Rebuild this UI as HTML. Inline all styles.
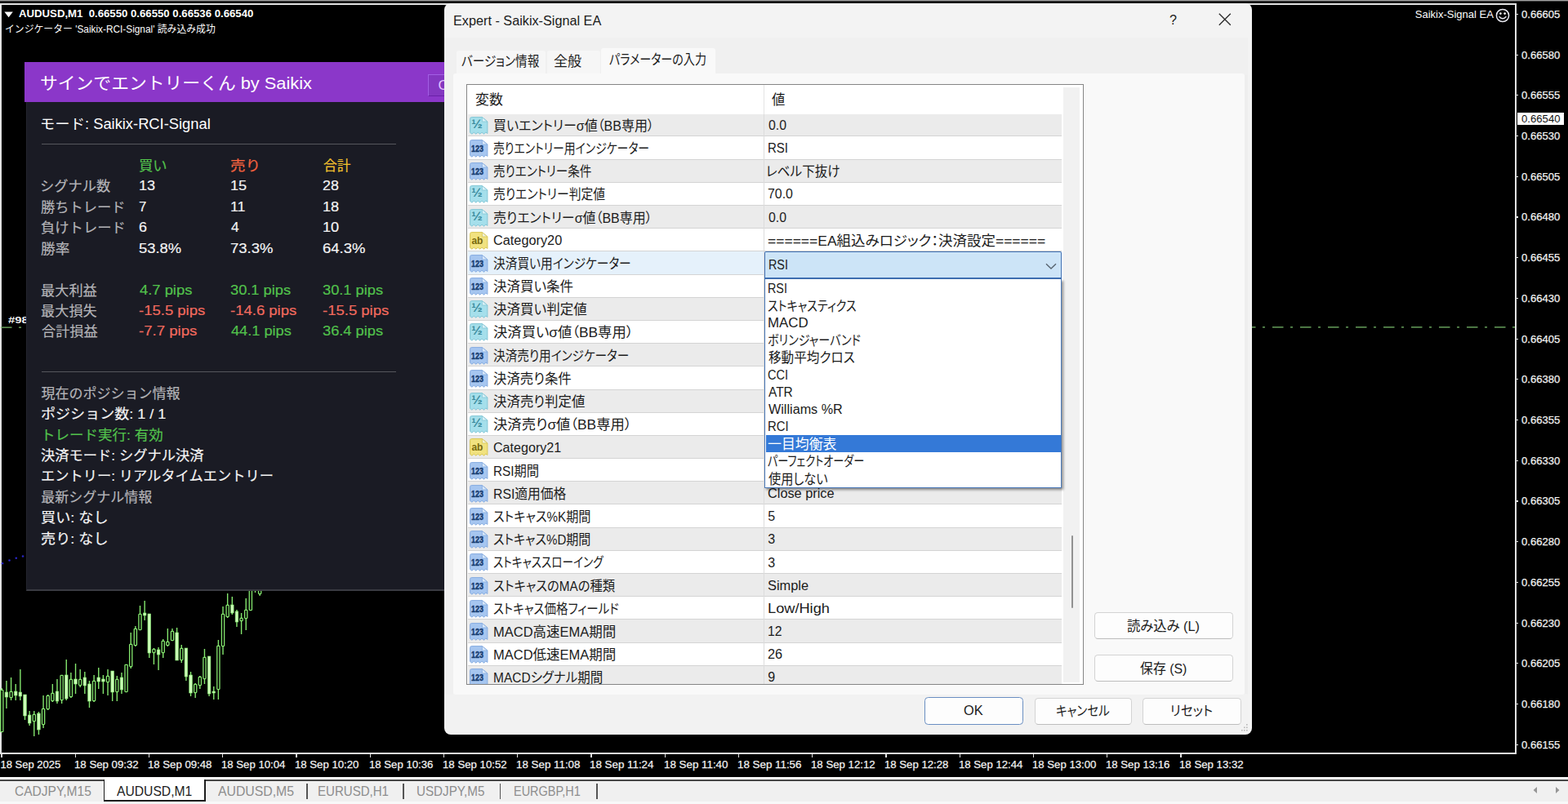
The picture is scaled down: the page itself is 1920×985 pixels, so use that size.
<!DOCTYPE html>
<html lang="ja"><head><meta charset="utf-8"><title>Expert - Saikix-Signal EA</title>
<style>
*{margin:0;padding:0;box-sizing:border-box}
html,body{width:1920px;height:985px;overflow:hidden;background:#000}
body{font-family:"Liberation Sans","Noto Sans CJK JP",sans-serif;position:relative}
#root{position:absolute;left:0;top:0;width:1920px;height:985px;overflow:hidden;background:#000}
#root>div,#root>svg,.t{position:absolute}
.t{white-space:pre;transform-origin:0 50%;display:block}
.d{color:#1b1b1b;font-size:16px;line-height:22px}
.j{color:#1b1b1b;font-size:16.6px;line-height:22px;font-feature-settings:"palt"}
.p{font-size:17px;line-height:24px;-webkit-text-stroke:.18px}
.a{font-size:13px;line-height:18px;color:#f2f2f2;-webkit-text-stroke:.25px}
</style></head>
<body><div id="root">
<div style="left:0;top:0;width:1920px;height:1px;background:#a2a2a2"></div>
<div style="left:0;top:1px;width:1920px;height:1px;background:#3a3a3a"></div>
<div style="left:0px;top:4.3px;width:1856.6px;height:1.5px;background:#e2e2e2;"></div>
<div style="left:0px;top:4.3px;width:1.5px;height:919.6px;background:#e2e2e2;"></div>
<div style="left:1855.3px;top:4.3px;width:1.25px;height:919.6px;background:#e2e2e2;"></div>
<div style="left:0px;top:922.4px;width:1856.6px;height:1.5px;background:#e2e2e2;"></div>
<div style="left:1856.6px;top:16.8px;width:2.6px;height:1.2px;background:#e2e2e2;"></div>
<span class="t a" style="left:1863.25px;top:8.82px;transform:scaleX(1.0054);">0.66605</span>
<div style="left:1856.6px;top:66.5px;width:2.6px;height:1.2px;background:#e2e2e2;"></div>
<span class="t a" style="left:1863.25px;top:58.54px;transform:scaleX(1.0054);">0.66580</span>
<div style="left:1856.6px;top:116.2px;width:2.6px;height:1.2px;background:#e2e2e2;"></div>
<span class="t a" style="left:1863.25px;top:108.26px;transform:scaleX(1.0054);">0.66555</span>
<div style="left:1856.6px;top:166.0px;width:2.6px;height:1.2px;background:#e2e2e2;"></div>
<span class="t a" style="left:1863.25px;top:157.98px;transform:scaleX(1.0054);">0.66530</span>
<div style="left:1856.6px;top:215.7px;width:2.6px;height:1.2px;background:#e2e2e2;"></div>
<span class="t a" style="left:1863.25px;top:207.70px;transform:scaleX(1.0054);">0.66505</span>
<div style="left:1856.6px;top:265.4px;width:2.6px;height:1.2px;background:#e2e2e2;"></div>
<span class="t a" style="left:1863.25px;top:257.42px;transform:scaleX(1.0054);">0.66480</span>
<div style="left:1856.6px;top:315.1px;width:2.6px;height:1.2px;background:#e2e2e2;"></div>
<span class="t a" style="left:1863.25px;top:307.14px;transform:scaleX(1.0054);">0.66455</span>
<div style="left:1856.6px;top:364.8px;width:2.6px;height:1.2px;background:#e2e2e2;"></div>
<span class="t a" style="left:1863.25px;top:356.86px;transform:scaleX(1.0054);">0.66430</span>
<div style="left:1856.6px;top:414.6px;width:2.6px;height:1.2px;background:#e2e2e2;"></div>
<span class="t a" style="left:1863.25px;top:406.58px;transform:scaleX(1.0054);">0.66405</span>
<div style="left:1856.6px;top:464.3px;width:2.6px;height:1.2px;background:#e2e2e2;"></div>
<span class="t a" style="left:1863.25px;top:456.30px;transform:scaleX(1.0054);">0.66380</span>
<div style="left:1856.6px;top:514.0px;width:2.6px;height:1.2px;background:#e2e2e2;"></div>
<span class="t a" style="left:1863.25px;top:506.02px;transform:scaleX(1.0054);">0.66355</span>
<div style="left:1856.6px;top:563.7px;width:2.6px;height:1.2px;background:#e2e2e2;"></div>
<span class="t a" style="left:1863.25px;top:555.74px;transform:scaleX(1.0054);">0.66330</span>
<div style="left:1856.6px;top:613.4px;width:2.6px;height:1.2px;background:#e2e2e2;"></div>
<span class="t a" style="left:1863.25px;top:605.46px;transform:scaleX(1.0054);">0.66305</span>
<div style="left:1856.6px;top:663.2px;width:2.6px;height:1.2px;background:#e2e2e2;"></div>
<span class="t a" style="left:1863.25px;top:655.18px;transform:scaleX(1.0054);">0.66280</span>
<div style="left:1856.6px;top:712.9px;width:2.6px;height:1.2px;background:#e2e2e2;"></div>
<span class="t a" style="left:1863.25px;top:704.90px;transform:scaleX(1.0054);">0.66255</span>
<div style="left:1856.6px;top:762.6px;width:2.6px;height:1.2px;background:#e2e2e2;"></div>
<span class="t a" style="left:1863.25px;top:754.62px;transform:scaleX(1.0054);">0.66230</span>
<div style="left:1856.6px;top:812.3px;width:2.6px;height:1.2px;background:#e2e2e2;"></div>
<span class="t a" style="left:1863.25px;top:804.34px;transform:scaleX(1.0054);">0.66205</span>
<div style="left:1856.6px;top:862.0px;width:2.6px;height:1.2px;background:#e2e2e2;"></div>
<span class="t a" style="left:1863.25px;top:854.06px;transform:scaleX(1.0054);">0.66180</span>
<div style="left:1856.6px;top:911.8px;width:2.6px;height:1.2px;background:#e2e2e2;"></div>
<span class="t a" style="left:1863.25px;top:903.78px;transform:scaleX(1.0054);">0.66155</span>
<div style="left:1858.3px;top:138.2px;width:57.2px;height:15px;background:#ffffff;"></div>
<span class="t" style="left:1862.99px;top:137.22px;color:#111;font-size:13px;line-height:18px;transform:scaleX(1.0109);">0.66540</span>
<div style="left:1.4px;top:923.9px;width:1.2px;height:4.4px;background:#e2e2e2;"></div>
<span class="t a" style="left:0.45px;top:928.22px;">18 Sep 2025</span>
<div style="left:91.7px;top:923.9px;width:1.2px;height:4.4px;background:#e2e2e2;"></div>
<span class="t a" style="left:90.69px;top:928.22px;transform:scaleX(1.0171);">18 Sep 09:32</span>
<div style="left:181.9px;top:923.9px;width:1.2px;height:4.4px;background:#e2e2e2;"></div>
<span class="t a" style="left:180.94px;top:928.22px;transform:scaleX(1.0138);">18 Sep 09:48</span>
<div style="left:272.1px;top:923.9px;width:1.2px;height:4.4px;background:#e2e2e2;"></div>
<span class="t a" style="left:271.19px;top:928.22px;transform:scaleX(1.0138);">18 Sep 10:04</span>
<div style="left:362.4px;top:923.9px;width:1.2px;height:4.4px;background:#e2e2e2;"></div>
<span class="t a" style="left:361.44px;top:928.22px;transform:scaleX(1.0138);">18 Sep 10:20</span>
<div style="left:452.6px;top:923.9px;width:1.2px;height:4.4px;background:#e2e2e2;"></div>
<span class="t a" style="left:451.69px;top:928.22px;transform:scaleX(1.0138);">18 Sep 10:36</span>
<div style="left:542.9px;top:923.9px;width:1.2px;height:4.4px;background:#e2e2e2;"></div>
<span class="t a" style="left:541.94px;top:928.22px;transform:scaleX(1.0171);">18 Sep 10:52</span>
<div style="left:633.1px;top:923.9px;width:1.2px;height:4.4px;background:#e2e2e2;"></div>
<span class="t a" style="left:632.18px;top:928.22px;transform:scaleX(1.0272);">18 Sep 11:08</span>
<div style="left:723.4px;top:923.9px;width:1.2px;height:4.4px;background:#e2e2e2;"></div>
<span class="t a" style="left:722.43px;top:928.22px;transform:scaleX(1.0272);">18 Sep 11:24</span>
<div style="left:813.6px;top:923.9px;width:1.2px;height:4.4px;background:#e2e2e2;"></div>
<span class="t a" style="left:812.68px;top:928.22px;transform:scaleX(1.0272);">18 Sep 11:40</span>
<div style="left:903.9px;top:923.9px;width:1.2px;height:4.4px;background:#e2e2e2;"></div>
<span class="t a" style="left:902.93px;top:928.22px;transform:scaleX(1.0272);">18 Sep 11:56</span>
<div style="left:994.1px;top:923.9px;width:1.2px;height:4.4px;background:#e2e2e2;"></div>
<span class="t a" style="left:993.19px;top:928.22px;transform:scaleX(1.0171);">18 Sep 12:12</span>
<div style="left:1084.4px;top:923.9px;width:1.2px;height:4.4px;background:#e2e2e2;"></div>
<span class="t a" style="left:1083.44px;top:928.22px;transform:scaleX(1.0138);">18 Sep 12:28</span>
<div style="left:1174.7px;top:923.9px;width:1.2px;height:4.4px;background:#e2e2e2;"></div>
<span class="t a" style="left:1173.69px;top:928.22px;transform:scaleX(1.0138);">18 Sep 12:44</span>
<div style="left:1264.9px;top:923.9px;width:1.2px;height:4.4px;background:#e2e2e2;"></div>
<span class="t a" style="left:1263.94px;top:928.22px;transform:scaleX(1.0138);">18 Sep 13:00</span>
<div style="left:1355.2px;top:923.9px;width:1.2px;height:4.4px;background:#e2e2e2;"></div>
<span class="t a" style="left:1354.19px;top:928.22px;transform:scaleX(1.0138);">18 Sep 13:16</span>
<div style="left:1445.4px;top:923.9px;width:1.2px;height:4.4px;background:#e2e2e2;"></div>
<span class="t a" style="left:1444.44px;top:928.22px;transform:scaleX(1.0171);">18 Sep 13:32</span>
<svg width="1920" height="985" style="left:0;top:0" viewBox="0 0 1920 985"><path d="M1533 400.8H1855" stroke="#7abd6c" stroke-width="1.3" stroke-dasharray="13.5 8.5 3 9" stroke-dashoffset="9" fill="none"/><path d="M1 401.2H14.5M23 401.2H26" stroke="#7abd6c" stroke-width="1.3" fill="none"/><g fill="#2a26c4"><circle cx="3" cy="690.2" r="1.3"/><circle cx="11.5" cy="686.5" r="1.3"/><circle cx="19.8" cy="683.8" r="1.3"/><circle cx="28" cy="681.5" r="1.3"/></g></svg>
<span class="t" style="left:9.66px;top:385.24px;color:#f0f0f0;font-size:11px;line-height:15px;font-weight:700;transform:scaleX(1.3521);">#98</span>
<svg width="12" height="8" style="left:5px;top:13.5px" viewBox="0 0 12 8"><path d="M0.4 0.4h10.4L5.6 7.2z" fill="#fff"/></svg>
<span class="t" style="left:23.25px;top:7.52px;color:#fff;font-size:13px;line-height:18px;font-weight:700;transform:scaleX(1.0142);">AUDUSD,M1  0.66550 0.66550 0.66536 0.66540</span>
<span class="t" style="left:5.51px;top:28.08px;color:#fff;font-size:12px;line-height:17px;transform:scaleX(0.9865);">インジケーター 'Saikix-RCI-Signal' 読み込み成功</span>
<span class="t" style="left:1732.75px;top:9.02px;color:#fff;font-size:13px;line-height:18px;">Saikix-Signal EA</span>
<svg width="20" height="20" style="left:1830px;top:8.7px" viewBox="0 0 20 20"><circle cx="10" cy="10" r="7.6" fill="none" stroke="#e8e8f0" stroke-width="1.5"/><circle cx="7.4" cy="7.6" r="1.3" fill="#fff"/><circle cx="12.6" cy="7.6" r="1.3" fill="#fff"/><path d="M5.6 11.2q4.4 5 8.8 0" fill="none" stroke="#e8e8f0" stroke-width="1.4"/></svg>
<svg width="340" height="985" style="left:0;top:0" viewBox="0 0 340 985" shape-rendering="auto"><line x1="2.30" y1="843" x2="2.30" y2="897" stroke="#84e66e" stroke-width="1.4"/><rect x="0.70" y="845.4" width="3.2" height="51.2" fill="#000" stroke="#84e66e" stroke-width="1.3" rx="0.8"/><line x1="7.94" y1="834" x2="7.94" y2="868" stroke="#84e66e" stroke-width="1.4"/><rect x="6.14" y="848" width="3.6" height="6" fill="#caffb6" stroke="#84e66e" stroke-width="0.6"/><line x1="13.58" y1="830" x2="13.58" y2="858" stroke="#84e66e" stroke-width="1.4"/><rect x="11.98" y="847.4" width="3.2" height="7.2" fill="#000" stroke="#84e66e" stroke-width="1.3" rx="0.8"/><line x1="19.22" y1="838" x2="19.22" y2="858" stroke="#84e66e" stroke-width="1.4"/><rect x="17.42" y="847" width="3.6" height="5" fill="#caffb6" stroke="#84e66e" stroke-width="0.6"/><line x1="24.86" y1="820" x2="24.86" y2="858" stroke="#84e66e" stroke-width="1.4"/><rect x="23.06" y="848" width="3.6" height="5" fill="#caffb6" stroke="#84e66e" stroke-width="0.6"/><line x1="30.50" y1="851" x2="30.50" y2="882" stroke="#84e66e" stroke-width="1.4"/><rect x="28.70" y="851" width="3.6" height="26" fill="#caffb6" stroke="#84e66e" stroke-width="0.6"/><line x1="36.14" y1="871" x2="36.14" y2="889" stroke="#84e66e" stroke-width="1.4"/><rect x="34.34" y="876" width="3.6" height="10" fill="#caffb6" stroke="#84e66e" stroke-width="0.6"/><line x1="41.78" y1="871" x2="41.78" y2="902" stroke="#84e66e" stroke-width="1.4"/><rect x="40.18" y="875.4" width="3.2" height="8.2" fill="#000" stroke="#84e66e" stroke-width="1.3" rx="0.8"/><line x1="47.42" y1="872" x2="47.42" y2="900" stroke="#84e66e" stroke-width="1.4"/><rect x="45.62" y="874" width="3.6" height="20" fill="#caffb6" stroke="#84e66e" stroke-width="0.6"/><line x1="53.06" y1="852" x2="53.06" y2="892" stroke="#84e66e" stroke-width="1.4"/><rect x="51.46" y="868.4" width="3.2" height="19.2" fill="#000" stroke="#84e66e" stroke-width="1.3" rx="0.8"/><line x1="58.70" y1="851" x2="58.70" y2="870" stroke="#84e66e" stroke-width="1.4"/><rect x="57.10" y="852.4" width="3.2" height="16.2" fill="#000" stroke="#84e66e" stroke-width="1.3" rx="0.8"/><line x1="64.34" y1="838" x2="64.34" y2="860" stroke="#84e66e" stroke-width="1.4"/><rect x="62.74" y="849.4" width="3.2" height="9.2" fill="#000" stroke="#84e66e" stroke-width="1.3" rx="0.8"/><line x1="69.98" y1="832" x2="69.98" y2="862" stroke="#84e66e" stroke-width="1.4"/><rect x="68.18" y="847" width="3.6" height="12" fill="#caffb6" stroke="#84e66e" stroke-width="0.6"/><line x1="75.62" y1="827" x2="75.62" y2="862" stroke="#84e66e" stroke-width="1.4"/><rect x="74.02" y="827.4" width="3.2" height="30.2" fill="#000" stroke="#84e66e" stroke-width="1.3" rx="0.8"/><line x1="81.26" y1="808" x2="81.26" y2="858" stroke="#84e66e" stroke-width="1.4"/><rect x="79.46" y="827" width="3.6" height="29" fill="#caffb6" stroke="#84e66e" stroke-width="0.6"/><line x1="86.90" y1="824" x2="86.90" y2="855" stroke="#84e66e" stroke-width="1.4"/><rect x="85.30" y="832.4" width="3.2" height="21.2" fill="#000" stroke="#84e66e" stroke-width="1.3" rx="0.8"/><line x1="92.54" y1="813" x2="92.54" y2="850" stroke="#84e66e" stroke-width="1.4"/><rect x="90.74" y="832" width="3.6" height="6" fill="#caffb6" stroke="#84e66e" stroke-width="0.6"/><line x1="98.18" y1="820" x2="98.18" y2="842" stroke="#84e66e" stroke-width="1.4"/><rect x="96.58" y="832.4" width="3.2" height="7.2" fill="#000" stroke="#84e66e" stroke-width="1.3" rx="0.8"/><line x1="103.82" y1="823" x2="103.82" y2="850" stroke="#84e66e" stroke-width="1.4"/><rect x="102.02" y="830" width="3.6" height="10" fill="#caffb6" stroke="#84e66e" stroke-width="0.6"/><line x1="109.46" y1="834" x2="109.46" y2="867" stroke="#84e66e" stroke-width="1.4"/><rect x="107.66" y="838" width="3.6" height="21" fill="#caffb6" stroke="#84e66e" stroke-width="0.6"/><line x1="115.10" y1="827" x2="115.10" y2="860" stroke="#84e66e" stroke-width="1.4"/><rect x="113.50" y="834.4" width="3.2" height="24.2" fill="#000" stroke="#84e66e" stroke-width="1.3" rx="0.8"/><line x1="120.74" y1="818" x2="120.74" y2="844" stroke="#84e66e" stroke-width="1.4"/><rect x="118.94" y="830" width="3.6" height="5" fill="#caffb6" stroke="#84e66e" stroke-width="0.6"/><line x1="126.38" y1="827" x2="126.38" y2="850" stroke="#84e66e" stroke-width="1.4"/><rect x="124.58" y="832" width="3.6" height="3" fill="#caffb6" stroke="#84e66e" stroke-width="0.6"/><line x1="132.02" y1="820" x2="132.02" y2="852" stroke="#84e66e" stroke-width="1.4"/><rect x="130.42" y="828.4" width="3.2" height="7.2" fill="#000" stroke="#84e66e" stroke-width="1.3" rx="0.8"/><line x1="137.66" y1="822" x2="137.66" y2="859" stroke="#84e66e" stroke-width="1.4"/><rect x="135.86" y="822" width="3.6" height="26" fill="#caffb6" stroke="#84e66e" stroke-width="0.6"/><line x1="143.30" y1="828" x2="143.30" y2="859" stroke="#84e66e" stroke-width="1.4"/><rect x="141.70" y="832.4" width="3.2" height="15.2" fill="#000" stroke="#84e66e" stroke-width="1.3" rx="0.8"/><line x1="148.94" y1="824" x2="148.94" y2="850" stroke="#84e66e" stroke-width="1.4"/><rect x="147.14" y="830" width="3.6" height="15" fill="#caffb6" stroke="#84e66e" stroke-width="0.6"/><line x1="154.58" y1="814" x2="154.58" y2="848" stroke="#84e66e" stroke-width="1.4"/><rect x="152.98" y="814.4" width="3.2" height="33.2" fill="#000" stroke="#84e66e" stroke-width="1.3" rx="0.8"/><line x1="160.22" y1="775" x2="160.22" y2="819" stroke="#84e66e" stroke-width="1.4"/><rect x="158.62" y="789.4" width="3.2" height="27.2" fill="#000" stroke="#84e66e" stroke-width="1.3" rx="0.8"/><line x1="165.86" y1="767" x2="165.86" y2="792" stroke="#84e66e" stroke-width="1.4"/><rect x="164.26" y="770.4" width="3.2" height="20.2" fill="#000" stroke="#84e66e" stroke-width="1.3" rx="0.8"/><line x1="171.50" y1="742" x2="171.50" y2="772" stroke="#84e66e" stroke-width="1.4"/><rect x="169.90" y="752.4" width="3.2" height="19.2" fill="#000" stroke="#84e66e" stroke-width="1.3" rx="0.8"/><line x1="177.14" y1="736" x2="177.14" y2="760" stroke="#84e66e" stroke-width="1.4"/><rect x="175.34" y="751" width="3.6" height="3" fill="#caffb6" stroke="#84e66e" stroke-width="0.6"/><line x1="182.78" y1="752" x2="182.78" y2="806" stroke="#84e66e" stroke-width="1.4"/><rect x="180.98" y="752" width="3.6" height="48" fill="#caffb6" stroke="#84e66e" stroke-width="0.6"/><line x1="188.42" y1="794" x2="188.42" y2="814" stroke="#84e66e" stroke-width="1.4"/><rect x="186.82" y="795.4" width="3.2" height="4.2" fill="#000" stroke="#84e66e" stroke-width="1.3" rx="0.8"/><line x1="194.06" y1="793" x2="194.06" y2="821" stroke="#84e66e" stroke-width="1.4"/><rect x="192.26" y="796" width="3.6" height="6" fill="#caffb6" stroke="#84e66e" stroke-width="0.6"/><line x1="199.70" y1="783" x2="199.70" y2="806" stroke="#84e66e" stroke-width="1.4"/><rect x="198.10" y="785.4" width="3.2" height="14.2" fill="#000" stroke="#84e66e" stroke-width="1.3" rx="0.8"/><line x1="205.34" y1="770" x2="205.34" y2="792" stroke="#84e66e" stroke-width="1.4"/><rect x="203.74" y="786.4" width="3.2" height="4.2" fill="#000" stroke="#84e66e" stroke-width="1.3" rx="0.8"/><line x1="210.98" y1="770" x2="210.98" y2="785" stroke="#84e66e" stroke-width="1.4"/><rect x="209.38" y="773.4" width="3.2" height="11.2" fill="#000" stroke="#84e66e" stroke-width="1.3" rx="0.8"/><line x1="216.62" y1="769" x2="216.62" y2="809" stroke="#84e66e" stroke-width="1.4"/><rect x="214.82" y="775" width="3.6" height="34" fill="#caffb6" stroke="#84e66e" stroke-width="0.6"/><line x1="222.26" y1="790" x2="222.26" y2="812" stroke="#84e66e" stroke-width="1.4"/><rect x="220.66" y="794.4" width="3.2" height="14.2" fill="#000" stroke="#84e66e" stroke-width="1.3" rx="0.8"/><line x1="227.90" y1="794" x2="227.90" y2="834" stroke="#84e66e" stroke-width="1.4"/><rect x="226.10" y="794" width="3.6" height="35" fill="#caffb6" stroke="#84e66e" stroke-width="0.6"/><line x1="233.54" y1="823" x2="233.54" y2="853" stroke="#84e66e" stroke-width="1.4"/><rect x="231.74" y="827" width="3.6" height="22" fill="#caffb6" stroke="#84e66e" stroke-width="0.6"/><line x1="239.18" y1="837" x2="239.18" y2="855" stroke="#84e66e" stroke-width="1.4"/><rect x="237.58" y="838.4" width="3.2" height="10.2" fill="#000" stroke="#84e66e" stroke-width="1.3" rx="0.8"/><line x1="244.82" y1="828" x2="244.82" y2="844" stroke="#84e66e" stroke-width="1.4"/><rect x="243.22" y="829.4" width="3.2" height="10.2" fill="#000" stroke="#84e66e" stroke-width="1.3" rx="0.8"/><line x1="250.46" y1="795" x2="250.46" y2="838" stroke="#84e66e" stroke-width="1.4"/><rect x="248.86" y="805.4" width="3.2" height="26.2" fill="#000" stroke="#84e66e" stroke-width="1.3" rx="0.8"/><line x1="256.10" y1="804" x2="256.10" y2="853" stroke="#84e66e" stroke-width="1.4"/><rect x="254.30" y="804" width="3.6" height="46" fill="#caffb6" stroke="#84e66e" stroke-width="0.6"/><line x1="261.74" y1="841" x2="261.74" y2="857" stroke="#84e66e" stroke-width="1.4"/><rect x="259.94" y="847" width="3.6" height="2" fill="#caffb6" stroke="#84e66e" stroke-width="0.6"/><line x1="267.38" y1="784" x2="267.38" y2="857" stroke="#84e66e" stroke-width="1.4"/><rect x="265.78" y="791.4" width="3.2" height="53.2" fill="#000" stroke="#84e66e" stroke-width="1.3" rx="0.8"/><line x1="273.02" y1="743" x2="273.02" y2="802" stroke="#84e66e" stroke-width="1.4"/><rect x="271.42" y="752.4" width="3.2" height="39.2" fill="#000" stroke="#84e66e" stroke-width="1.3" rx="0.8"/><line x1="278.66" y1="727" x2="278.66" y2="757" stroke="#84e66e" stroke-width="1.4"/><rect x="277.06" y="741.4" width="3.2" height="14.2" fill="#000" stroke="#84e66e" stroke-width="1.3" rx="0.8"/><line x1="284.30" y1="731" x2="284.30" y2="753" stroke="#84e66e" stroke-width="1.4"/><rect x="282.50" y="741" width="3.6" height="10" fill="#caffb6" stroke="#84e66e" stroke-width="0.6"/><line x1="289.94" y1="747" x2="289.94" y2="768" stroke="#84e66e" stroke-width="1.4"/><rect x="288.14" y="749" width="3.6" height="13" fill="#caffb6" stroke="#84e66e" stroke-width="0.6"/><line x1="295.58" y1="751" x2="295.58" y2="777" stroke="#84e66e" stroke-width="1.4"/><rect x="293.98" y="757.4" width="3.2" height="3.2" fill="#000" stroke="#84e66e" stroke-width="1.3" rx="0.8"/><line x1="301.22" y1="733" x2="301.22" y2="772" stroke="#84e66e" stroke-width="1.4"/><rect x="299.62" y="747.4" width="3.2" height="10.2" fill="#000" stroke="#84e66e" stroke-width="1.3" rx="0.8"/><line x1="306.86" y1="700" x2="306.86" y2="748" stroke="#84e66e" stroke-width="1.4"/><rect x="305.26" y="705.4" width="3.2" height="42.2" fill="#000" stroke="#84e66e" stroke-width="1.3" rx="0.8"/><line x1="312.50" y1="700" x2="312.50" y2="726" stroke="#84e66e" stroke-width="1.4"/><rect x="310.90" y="700.4" width="3.2" height="9.2" fill="#000" stroke="#84e66e" stroke-width="1.3" rx="0.8"/><line x1="318.14" y1="715" x2="318.14" y2="730" stroke="#84e66e" stroke-width="1.4"/><rect x="316.54" y="722.4" width="3.2" height="5.2" fill="#000" stroke="#84e66e" stroke-width="1.3" rx="0.8"/></svg>
<div style="left:32px;top:120px;width:560px;height:603.6px;background:#1a1b24;border-left:1px solid #23242d;border-bottom:2px solid #3a3b42;"></div>
<div style="left:30px;top:75.7px;width:560px;height:49.8px;background:#8b37c9;"></div>
<div style="left:523.7px;top:91px;width:40px;height:26.8px;background:#8337c0;border:1.5px solid #a25fe4;border-bottom-color:#6a20a8;"></div>
<span class="t" style="left:536.45px;top:92.88px;color:#e4c2ff;font-size:17px;line-height:24px;">C</span>
<span class="t" style="left:49.44px;top:87.39px;color:#fff;font-size:21px;line-height:30px;transform:scaleX(1.0376);">サインでエントリーくん by Saikix</span>
<span class="t" style="left:48.91px;top:140.38px;color:#fff;font-size:17.5px;line-height:24px;transform:scaleX(1.0471);">モード: Saikix-RCI-Signal</span>
<div style="left:51px;top:176px;width:434px;height:1.3px;background:#55565c;"></div>
<div style="left:51px;top:455px;width:434px;height:1.3px;background:#55565c;"></div>
<span class="t p" style="left:170.24px;top:192.03px;color:#52c24c;transform:scaleX(1.0156);">買い</span>
<span class="t p" style="left:282.18px;top:192.03px;color:#f0613f;transform:scaleX(1.0924);">売り</span>
<span class="t p" style="left:395.51px;top:192.03px;color:#f2c12e;transform:scaleX(0.9848);">合計</span>
<span class="t p" style="left:49.22px;top:217.33px;color:#b4b4b8;transform:scaleX(1.0151);">シグナル数</span>
<span class="t p" style="left:169.67px;top:216.48px;color:#f4f4f4;transform:scaleX(1.0647);">13</span>
<span class="t p" style="left:281.67px;top:216.48px;color:#f4f4f4;transform:scaleX(1.0647);">15</span>
<span class="t p" style="left:395.22px;top:216.48px;color:#f4f4f4;transform:scaleX(1.0457);">28</span>
<span class="t p" style="left:50.49px;top:242.83px;color:#b4b4b8;transform:scaleX(1.0151);">勝ちトレード</span>
<span class="t p" style="left:170.26px;top:241.98px;color:#f4f4f4;transform:scaleX(0.9875);">7</span>
<span class="t p" style="left:281.69px;top:241.98px;color:#f4f4f4;transform:scaleX(1.0476);">11</span>
<span class="t p" style="left:394.67px;top:241.98px;color:#f4f4f4;transform:scaleX(1.0647);">18</span>
<span class="t p" style="left:50.24px;top:268.23px;color:#b4b4b8;transform:scaleX(1.0176);">負けトレード</span>
<span class="t p" style="left:170.21px;top:267.38px;color:#f4f4f4;transform:scaleX(1.0500);">6</span>
<span class="t p" style="left:282.75px;top:267.38px;color:#f4f4f4;transform:scaleX(1.0171);">4</span>
<span class="t p" style="left:394.67px;top:267.38px;color:#f4f4f4;transform:scaleX(1.0647);">10</span>
<span class="t p" style="left:50.48px;top:293.73px;color:#b4b4b8;transform:scaleX(1.0382);">勝率</span>
<span class="t p" style="left:170.46px;top:292.88px;color:#f4f4f4;transform:scaleX(1.0794);">53.8%</span>
<span class="t p" style="left:282.19px;top:292.88px;color:#f4f4f4;transform:scaleX(1.0851);">73.3%</span>
<span class="t p" style="left:395.19px;top:292.88px;color:#f4f4f4;transform:scaleX(1.0851);">64.3%</span>
<span class="t p" style="left:50.24px;top:344.53px;color:#b4b4b8;transform:scaleX(1.0112);">最大利益</span>
<span class="t p" style="left:170.73px;top:343.68px;color:#52c24c;transform:scaleX(1.0809);">4.7 pips</span>
<span class="t p" style="left:282.46px;top:343.68px;color:#52c24c;transform:scaleX(1.0735);">30.1 pips</span>
<span class="t p" style="left:395.46px;top:343.68px;color:#52c24c;transform:scaleX(1.0735);">30.1 pips</span>
<span class="t p" style="left:50.24px;top:370.03px;color:#b4b4b8;transform:scaleX(1.0112);">最大損失</span>
<span class="t p" style="left:170.18px;top:369.18px;color:#f26a5e;transform:scaleX(1.0884);">-15.5 pips</span>
<span class="t p" style="left:282.18px;top:369.18px;color:#f26a5e;transform:scaleX(1.0884);">-14.6 pips</span>
<span class="t p" style="left:395.18px;top:369.18px;color:#f26a5e;transform:scaleX(1.0884);">-15.5 pips</span>
<span class="t p" style="left:50.50px;top:395.33px;color:#b4b4b8;transform:scaleX(1.0075);">合計損益</span>
<span class="t p" style="left:170.18px;top:394.48px;color:#f26a5e;transform:scaleX(1.0938);">-7.7 pips</span>
<span class="t p" style="left:282.73px;top:394.48px;color:#52c24c;transform:scaleX(1.0696);">44.1 pips</span>
<span class="t p" style="left:395.46px;top:394.48px;color:#52c24c;transform:scaleX(1.0735);">36.4 pips</span>
<span class="t p" style="left:50.50px;top:471.03px;color:#b4b4b8;">現在のポジション情報</span>
<span class="t p" style="left:49.94px;top:496.33px;color:#f4f4f4;transform:scaleX(1.0613);">ポジション数: 1 / 1</span>
<span class="t p" style="left:49.53px;top:521.73px;color:#52c24c;transform:scaleX(1.0302);">トレード実行: 有効</span>
<span class="t p" style="left:50.49px;top:547.03px;color:#f4f4f4;transform:scaleX(1.0153);">決済モード: シグナル決済</span>
<span class="t p" style="left:49.73px;top:572.33px;color:#f4f4f4;transform:scaleX(1.0144);">エントリー: リアルタイムエントリー</span>
<span class="t p" style="left:50.25px;top:597.73px;color:#b4b4b8;">最新シグナル情報</span>
<span class="t p" style="left:50.20px;top:623.03px;color:#f4f4f4;transform:scaleX(1.0667);">買い: なし</span>
<span class="t p" style="left:50.20px;top:648.53px;color:#f4f4f4;transform:scaleX(1.0667);">売り: なし</span>
<div style="left:544px;top:4.3px;width:988.5px;height:896.2px;background:linear-gradient(#f3f3f3 0,#f3f3f3 42px,#f0f0f0 42px,#f0f0f0 846px,#f2f2f2 847px);border-radius:8px;"></div>
<div style="left:1527.5px;top:14px;width:5px;height:878px;background:#f3f3f3;"></div>
<div style="left:1523.5px;top:92px;width:4px;height:758px;background:#eeeeee;"></div>
<span class="t d" style="left:554.73px;top:15.04px;transform:scaleX(1.0141);">Expert - Saikix-Signal EA</span>
<span class="t" style="left:1431.89px;top:13.18px;color:#222;font-size:17px;line-height:24px;transform:scaleX(0.9500);">?</span>
<svg width="18" height="18" style="left:1491px;top:15.3px" viewBox="0 0 18 18"><path d="M1.8 1.8L15.8 15.8M15.8 1.8L1.8 15.8" stroke="#2b2b2b" stroke-width="1.35" fill="none"/></svg>
<div style="left:558.5px;top:62px;width:109px;height:28px;background:#f6f6f6;border-radius:3px 3px 0 0;"></div>
<div style="left:669.5px;top:62px;width:65px;height:28px;background:#f6f6f6;border-radius:3px 3px 0 0;"></div>
<div style="left:555px;top:89.5px;width:969px;height:761.3px;background:#f9f9f9;border-radius:3px;"></div>
<div style="left:736px;top:58.5px;width:139.5px;height:33px;background:#f9f9f9;border-radius:3px 3px 0 0;"></div>
<span class="t j" style="left:565.34px;top:65.49px;transform:scaleX(0.8806);">バージョン情報</span>
<span class="t j" style="left:677.73px;top:65.49px;transform:scaleX(1.0312);">全般</span>
<span class="t j" style="left:746.36px;top:63.39px;transform:scaleX(0.8478);">パラメーターの入力</span>
<div style="left:571px;top:102.6px;width:755.5px;height:736.6px;background:#ffffff;border:1.5px solid #858585;"></div>
<div style="left:1301.6px;top:106.6px;width:20.6px;height:729.5px;background:#f1f1f1;"></div>
<div style="left:1311.5px;top:655.5px;width:2px;height:89.5px;background:#929292;border-radius:1px;"></div>
<span class="t j" style="left:582.23px;top:112.29px;transform:scaleX(1.0236);">変数</span>
<span class="t j" style="left:944.75px;top:112.29px;transform:scaleX(0.9841);">値</span>
<div style="left:572.5px;top:139.6px;width:727.3px;height:27.84px;background:#ebebeb;border-bottom:1px solid #d4d4d4;"></div>
<div style="left:934.5px;top:139.6px;width:1px;height:27.84px;background:#dcdcdc;"></div>
<svg width="23" height="22" style="left:575px;top:142.75px" viewBox="0 0 23 22"><path d="M2.6 0.6H15.4L21.9 6V20.5L19.9 19L17.6 21.2L15.1 19.2L12.7 21.2L10.2 19.2L7.8 21.2L5.3 19.2L2.9 21.2L0.6 19.4V2.6Q0.6 0.6 2.6 0.6Z" fill="#a5dfeb" stroke="#83c6d6" stroke-width="1"/><path d="M15.4 0.6V6H21.9Z" fill="#eef7fc" fill-opacity=".7" stroke="#83c6d6" stroke-width=".8"/><text x="8.9" y="14.4" text-anchor="middle" font-family="Liberation Sans,sans-serif" font-size="15.5" font-weight="700" fill="#3a8b9d" textLength="13.5" lengthAdjust="spacingAndGlyphs">½</text></svg>
<span class="t j" style="left:603.84px;top:143.74px;transform:scaleX(0.9634);">買いエントリーσ値（BB専用）</span>
<span class="t d" style="left:940.51px;top:142.89px;transform:scaleX(0.9882);">0.0</span>
<div style="left:572.5px;top:167.44px;width:727.3px;height:28.19px;background:#ffffff;border-bottom:1px solid #d4d4d4;"></div>
<div style="left:934.5px;top:167.44px;width:1px;height:28.19px;background:#dcdcdc;"></div>
<svg width="23" height="22" style="left:575px;top:170.94px" viewBox="0 0 23 22"><path d="M2.6 0.6H15.4L21.9 6V20.5L19.9 19L17.6 21.2L15.1 19.2L12.7 21.2L10.2 19.2L7.8 21.2L5.3 19.2L2.9 21.2L0.6 19.4V2.6Q0.6 0.6 2.6 0.6Z" fill="#a6c6f0" stroke="#86ace0" stroke-width="1"/><path d="M15.4 0.6V6H21.9Z" fill="#eef7fc" fill-opacity=".7" stroke="#86ace0" stroke-width=".8"/><text x="9.6" y="15.2" text-anchor="middle" font-family="Liberation Sans,sans-serif" font-size="11.5" font-weight="700" fill="#163c70" stroke="#163c70" stroke-width=".45" textLength="15" lengthAdjust="spacingAndGlyphs">123</text></svg>
<span class="t j" style="left:604.17px;top:171.93px;transform:scaleX(0.8358);">売りエントリー用インジケーター</span>
<span class="t d" style="left:939.83px;top:171.08px;transform:scaleX(0.9375);">RSI</span>
<div style="left:572.5px;top:195.63px;width:727.3px;height:28.19px;background:#ebebeb;border-bottom:1px solid #d4d4d4;"></div>
<div style="left:934.5px;top:195.63px;width:1px;height:28.19px;background:#dcdcdc;"></div>
<svg width="23" height="22" style="left:575px;top:199.13px" viewBox="0 0 23 22"><path d="M2.6 0.6H15.4L21.9 6V20.5L19.9 19L17.6 21.2L15.1 19.2L12.7 21.2L10.2 19.2L7.8 21.2L5.3 19.2L2.9 21.2L0.6 19.4V2.6Q0.6 0.6 2.6 0.6Z" fill="#a6c6f0" stroke="#86ace0" stroke-width="1"/><path d="M15.4 0.6V6H21.9Z" fill="#eef7fc" fill-opacity=".7" stroke="#86ace0" stroke-width=".8"/><text x="9.6" y="15.2" text-anchor="middle" font-family="Liberation Sans,sans-serif" font-size="11.5" font-weight="700" fill="#163c70" stroke="#163c70" stroke-width=".45" textLength="15" lengthAdjust="spacingAndGlyphs">123</text></svg>
<span class="t j" style="left:604.14px;top:200.12px;transform:scaleX(0.8790);">売りエントリー条件</span>
<span class="t j" style="left:938.42px;top:200.12px;transform:scaleX(0.9380);">レベル下抜け</span>
<div style="left:572.5px;top:223.82px;width:727.3px;height:28.19px;background:#ffffff;border-bottom:1px solid #d4d4d4;"></div>
<div style="left:934.5px;top:223.82px;width:1px;height:28.19px;background:#dcdcdc;"></div>
<svg width="23" height="22" style="left:575px;top:227.32px" viewBox="0 0 23 22"><path d="M2.6 0.6H15.4L21.9 6V20.5L19.9 19L17.6 21.2L15.1 19.2L12.7 21.2L10.2 19.2L7.8 21.2L5.3 19.2L2.9 21.2L0.6 19.4V2.6Q0.6 0.6 2.6 0.6Z" fill="#a5dfeb" stroke="#83c6d6" stroke-width="1"/><path d="M15.4 0.6V6H21.9Z" fill="#eef7fc" fill-opacity=".7" stroke="#83c6d6" stroke-width=".8"/><text x="8.9" y="14.4" text-anchor="middle" font-family="Liberation Sans,sans-serif" font-size="15.5" font-weight="700" fill="#3a8b9d" textLength="13.5" lengthAdjust="spacingAndGlyphs">½</text></svg>
<span class="t j" style="left:604.13px;top:228.31px;transform:scaleX(0.8926);">売りエントリー判定値</span>
<span class="t d" style="left:940.26px;top:227.46px;transform:scaleX(0.9916);">70.0</span>
<div style="left:572.5px;top:252.01px;width:727.3px;height:28.19px;background:#ebebeb;border-bottom:1px solid #d4d4d4;"></div>
<div style="left:934.5px;top:252.01px;width:1px;height:28.19px;background:#dcdcdc;"></div>
<svg width="23" height="22" style="left:575px;top:255.51px" viewBox="0 0 23 22"><path d="M2.6 0.6H15.4L21.9 6V20.5L19.9 19L17.6 21.2L15.1 19.2L12.7 21.2L10.2 19.2L7.8 21.2L5.3 19.2L2.9 21.2L0.6 19.4V2.6Q0.6 0.6 2.6 0.6Z" fill="#a5dfeb" stroke="#83c6d6" stroke-width="1"/><path d="M15.4 0.6V6H21.9Z" fill="#eef7fc" fill-opacity=".7" stroke="#83c6d6" stroke-width=".8"/><text x="8.9" y="14.4" text-anchor="middle" font-family="Liberation Sans,sans-serif" font-size="15.5" font-weight="700" fill="#3a8b9d" textLength="13.5" lengthAdjust="spacingAndGlyphs">½</text></svg>
<span class="t j" style="left:604.08px;top:256.50px;transform:scaleX(0.9606);">売りエントリーσ値（BB専用）</span>
<span class="t d" style="left:940.51px;top:255.65px;transform:scaleX(0.9882);">0.0</span>
<div style="left:572.5px;top:280.2px;width:727.3px;height:28.19px;background:#ffffff;border-bottom:1px solid #d4d4d4;"></div>
<div style="left:934.5px;top:280.2px;width:1px;height:28.19px;background:#dcdcdc;"></div>
<svg width="23" height="22" style="left:575px;top:283.70px" viewBox="0 0 23 22"><path d="M2.6 0.6H15.4L21.9 6V20.5L19.9 19L17.6 21.2L15.1 19.2L12.7 21.2L10.2 19.2L7.8 21.2L5.3 19.2L2.9 21.2L0.6 19.4V2.6Q0.6 0.6 2.6 0.6Z" fill="#f1e27f" stroke="#d8c757" stroke-width="1"/><path d="M15.4 0.6V6H21.9Z" fill="#eef7fc" fill-opacity=".7" stroke="#d8c757" stroke-width=".8"/><text x="9.4" y="14.6" text-anchor="middle" font-family="Liberation Sans,sans-serif" font-size="13" font-weight="700" fill="#7a6a0e" textLength="14" lengthAdjust="spacingAndGlyphs">ab</text></svg>
<span class="t d" style="left:604.04px;top:283.84px;transform:scaleX(1.0178);">Category20</span>
<span class="t j" style="left:940.21px;top:284.69px;transform:scaleX(1.0537);">======EA組込みロジック：決済設定======</span>
<div style="left:572.5px;top:308.39px;width:727.3px;height:28.19px;background:#e5f1fb;border-bottom:1px solid #d4d4d4;"></div>
<div style="left:934.5px;top:308.39px;width:1px;height:28.19px;background:#dcdcdc;"></div>
<svg width="23" height="22" style="left:575px;top:311.89px" viewBox="0 0 23 22"><path d="M2.6 0.6H15.4L21.9 6V20.5L19.9 19L17.6 21.2L15.1 19.2L12.7 21.2L10.2 19.2L7.8 21.2L5.3 19.2L2.9 21.2L0.6 19.4V2.6Q0.6 0.6 2.6 0.6Z" fill="#a6c6f0" stroke="#86ace0" stroke-width="1"/><path d="M15.4 0.6V6H21.9Z" fill="#eef7fc" fill-opacity=".7" stroke="#86ace0" stroke-width=".8"/><text x="9.6" y="15.2" text-anchor="middle" font-family="Liberation Sans,sans-serif" font-size="11.5" font-weight="700" fill="#163c70" stroke="#163c70" stroke-width=".45" textLength="15" lengthAdjust="spacingAndGlyphs">123</text></svg>
<span class="t j" style="left:604.14px;top:312.88px;transform:scaleX(0.8862);">決済買い用インジケーター</span>
<div style="left:572.5px;top:336.58px;width:727.3px;height:28.19px;background:#ffffff;border-bottom:1px solid #d4d4d4;"></div>
<div style="left:934.5px;top:336.58px;width:1px;height:28.19px;background:#dcdcdc;"></div>
<svg width="23" height="22" style="left:575px;top:340.08px" viewBox="0 0 23 22"><path d="M2.6 0.6H15.4L21.9 6V20.5L19.9 19L17.6 21.2L15.1 19.2L12.7 21.2L10.2 19.2L7.8 21.2L5.3 19.2L2.9 21.2L0.6 19.4V2.6Q0.6 0.6 2.6 0.6Z" fill="#a6c6f0" stroke="#86ace0" stroke-width="1"/><path d="M15.4 0.6V6H21.9Z" fill="#eef7fc" fill-opacity=".7" stroke="#86ace0" stroke-width=".8"/><text x="9.6" y="15.2" text-anchor="middle" font-family="Liberation Sans,sans-serif" font-size="11.5" font-weight="700" fill="#163c70" stroke="#163c70" stroke-width=".45" textLength="15" lengthAdjust="spacingAndGlyphs">123</text></svg>
<span class="t j" style="left:604.06px;top:341.07px;transform:scaleX(0.9933);">決済買い条件</span>
<div style="left:572.5px;top:364.77px;width:727.3px;height:28.19px;background:#ebebeb;border-bottom:1px solid #d4d4d4;"></div>
<div style="left:934.5px;top:364.77px;width:1px;height:28.19px;background:#dcdcdc;"></div>
<svg width="23" height="22" style="left:575px;top:368.27px" viewBox="0 0 23 22"><path d="M2.6 0.6H15.4L21.9 6V20.5L19.9 19L17.6 21.2L15.1 19.2L12.7 21.2L10.2 19.2L7.8 21.2L5.3 19.2L2.9 21.2L0.6 19.4V2.6Q0.6 0.6 2.6 0.6Z" fill="#a5dfeb" stroke="#83c6d6" stroke-width="1"/><path d="M15.4 0.6V6H21.9Z" fill="#eef7fc" fill-opacity=".7" stroke="#83c6d6" stroke-width=".8"/><text x="8.9" y="14.4" text-anchor="middle" font-family="Liberation Sans,sans-serif" font-size="15.5" font-weight="700" fill="#3a8b9d" textLength="13.5" lengthAdjust="spacingAndGlyphs">½</text></svg>
<span class="t j" style="left:604.05px;top:369.26px;transform:scaleX(0.9969);">決済買い判定値</span>
<div style="left:572.5px;top:392.96px;width:727.3px;height:28.19px;background:#ffffff;border-bottom:1px solid #d4d4d4;"></div>
<div style="left:934.5px;top:392.96px;width:1px;height:28.19px;background:#dcdcdc;"></div>
<svg width="23" height="22" style="left:575px;top:396.46px" viewBox="0 0 23 22"><path d="M2.6 0.6H15.4L21.9 6V20.5L19.9 19L17.6 21.2L15.1 19.2L12.7 21.2L10.2 19.2L7.8 21.2L5.3 19.2L2.9 21.2L0.6 19.4V2.6Q0.6 0.6 2.6 0.6Z" fill="#a5dfeb" stroke="#83c6d6" stroke-width="1"/><path d="M15.4 0.6V6H21.9Z" fill="#eef7fc" fill-opacity=".7" stroke="#83c6d6" stroke-width=".8"/><text x="8.9" y="14.4" text-anchor="middle" font-family="Liberation Sans,sans-serif" font-size="15.5" font-weight="700" fill="#3a8b9d" textLength="13.5" lengthAdjust="spacingAndGlyphs">½</text></svg>
<span class="t j" style="left:604.02px;top:397.45px;transform:scaleX(1.0441);">決済買いσ値（BB専用）</span>
<div style="left:572.5px;top:421.15px;width:727.3px;height:28.19px;background:#ebebeb;border-bottom:1px solid #d4d4d4;"></div>
<div style="left:934.5px;top:421.15px;width:1px;height:28.19px;background:#dcdcdc;"></div>
<svg width="23" height="22" style="left:575px;top:424.65px" viewBox="0 0 23 22"><path d="M2.6 0.6H15.4L21.9 6V20.5L19.9 19L17.6 21.2L15.1 19.2L12.7 21.2L10.2 19.2L7.8 21.2L5.3 19.2L2.9 21.2L0.6 19.4V2.6Q0.6 0.6 2.6 0.6Z" fill="#a6c6f0" stroke="#86ace0" stroke-width="1"/><path d="M15.4 0.6V6H21.9Z" fill="#eef7fc" fill-opacity=".7" stroke="#86ace0" stroke-width=".8"/><text x="9.6" y="15.2" text-anchor="middle" font-family="Liberation Sans,sans-serif" font-size="11.5" font-weight="700" fill="#163c70" stroke="#163c70" stroke-width=".45" textLength="15" lengthAdjust="spacingAndGlyphs">123</text></svg>
<span class="t j" style="left:604.14px;top:425.64px;transform:scaleX(0.8816);">決済売り用インジケーター</span>
<div style="left:572.5px;top:449.34px;width:727.3px;height:28.19px;background:#ffffff;border-bottom:1px solid #d4d4d4;"></div>
<div style="left:934.5px;top:449.34px;width:1px;height:28.19px;background:#dcdcdc;"></div>
<svg width="23" height="22" style="left:575px;top:452.84px" viewBox="0 0 23 22"><path d="M2.6 0.6H15.4L21.9 6V20.5L19.9 19L17.6 21.2L15.1 19.2L12.7 21.2L10.2 19.2L7.8 21.2L5.3 19.2L2.9 21.2L0.6 19.4V2.6Q0.6 0.6 2.6 0.6Z" fill="#a6c6f0" stroke="#86ace0" stroke-width="1"/><path d="M15.4 0.6V6H21.9Z" fill="#eef7fc" fill-opacity=".7" stroke="#86ace0" stroke-width=".8"/><text x="9.6" y="15.2" text-anchor="middle" font-family="Liberation Sans,sans-serif" font-size="11.5" font-weight="700" fill="#163c70" stroke="#163c70" stroke-width=".45" textLength="15" lengthAdjust="spacingAndGlyphs">123</text></svg>
<span class="t j" style="left:604.06px;top:453.83px;transform:scaleX(0.9890);">決済売り条件</span>
<div style="left:572.5px;top:477.53px;width:727.3px;height:28.19px;background:#ebebeb;border-bottom:1px solid #d4d4d4;"></div>
<div style="left:934.5px;top:477.53px;width:1px;height:28.19px;background:#dcdcdc;"></div>
<svg width="23" height="22" style="left:575px;top:481.03px" viewBox="0 0 23 22"><path d="M2.6 0.6H15.4L21.9 6V20.5L19.9 19L17.6 21.2L15.1 19.2L12.7 21.2L10.2 19.2L7.8 21.2L5.3 19.2L2.9 21.2L0.6 19.4V2.6Q0.6 0.6 2.6 0.6Z" fill="#a5dfeb" stroke="#83c6d6" stroke-width="1"/><path d="M15.4 0.6V6H21.9Z" fill="#eef7fc" fill-opacity=".7" stroke="#83c6d6" stroke-width=".8"/><text x="8.9" y="14.4" text-anchor="middle" font-family="Liberation Sans,sans-serif" font-size="15.5" font-weight="700" fill="#3a8b9d" textLength="13.5" lengthAdjust="spacingAndGlyphs">½</text></svg>
<span class="t j" style="left:604.06px;top:482.02px;transform:scaleX(0.9911);">決済売り判定値</span>
<div style="left:572.5px;top:505.72px;width:727.3px;height:28.19px;background:#ffffff;border-bottom:1px solid #d4d4d4;"></div>
<div style="left:934.5px;top:505.72px;width:1px;height:28.19px;background:#dcdcdc;"></div>
<svg width="23" height="22" style="left:575px;top:509.22px" viewBox="0 0 23 22"><path d="M2.6 0.6H15.4L21.9 6V20.5L19.9 19L17.6 21.2L15.1 19.2L12.7 21.2L10.2 19.2L7.8 21.2L5.3 19.2L2.9 21.2L0.6 19.4V2.6Q0.6 0.6 2.6 0.6Z" fill="#a5dfeb" stroke="#83c6d6" stroke-width="1"/><path d="M15.4 0.6V6H21.9Z" fill="#eef7fc" fill-opacity=".7" stroke="#83c6d6" stroke-width=".8"/><text x="8.9" y="14.4" text-anchor="middle" font-family="Liberation Sans,sans-serif" font-size="15.5" font-weight="700" fill="#3a8b9d" textLength="13.5" lengthAdjust="spacingAndGlyphs">½</text></svg>
<span class="t j" style="left:604.02px;top:510.21px;transform:scaleX(1.0441);">決済売りσ値（BB専用）</span>
<div style="left:572.5px;top:533.91px;width:727.3px;height:28.19px;background:#ebebeb;border-bottom:1px solid #d4d4d4;"></div>
<div style="left:934.5px;top:533.91px;width:1px;height:28.19px;background:#dcdcdc;"></div>
<svg width="23" height="22" style="left:575px;top:537.41px" viewBox="0 0 23 22"><path d="M2.6 0.6H15.4L21.9 6V20.5L19.9 19L17.6 21.2L15.1 19.2L12.7 21.2L10.2 19.2L7.8 21.2L5.3 19.2L2.9 21.2L0.6 19.4V2.6Q0.6 0.6 2.6 0.6Z" fill="#f1e27f" stroke="#d8c757" stroke-width="1"/><path d="M15.4 0.6V6H21.9Z" fill="#eef7fc" fill-opacity=".7" stroke="#d8c757" stroke-width=".8"/><text x="9.4" y="14.6" text-anchor="middle" font-family="Liberation Sans,sans-serif" font-size="13" font-weight="700" fill="#7a6a0e" textLength="14" lengthAdjust="spacingAndGlyphs">ab</text></svg>
<span class="t d" style="left:604.05px;top:537.55px;transform:scaleX(1.0055);">Category21</span>
<div style="left:572.5px;top:562.1px;width:727.3px;height:28.19px;background:#ffffff;border-bottom:1px solid #d4d4d4;"></div>
<div style="left:934.5px;top:562.1px;width:1px;height:28.19px;background:#dcdcdc;"></div>
<svg width="23" height="22" style="left:575px;top:565.60px" viewBox="0 0 23 22"><path d="M2.6 0.6H15.4L21.9 6V20.5L19.9 19L17.6 21.2L15.1 19.2L12.7 21.2L10.2 19.2L7.8 21.2L5.3 19.2L2.9 21.2L0.6 19.4V2.6Q0.6 0.6 2.6 0.6Z" fill="#a6c6f0" stroke="#86ace0" stroke-width="1"/><path d="M15.4 0.6V6H21.9Z" fill="#eef7fc" fill-opacity=".7" stroke="#86ace0" stroke-width=".8"/><text x="9.6" y="15.2" text-anchor="middle" font-family="Liberation Sans,sans-serif" font-size="11.5" font-weight="700" fill="#163c70" stroke="#163c70" stroke-width=".45" textLength="15" lengthAdjust="spacingAndGlyphs">123</text></svg>
<span class="t j" style="left:603.65px;top:566.59px;transform:scaleX(0.9219);">RSI期間</span>
<div style="left:572.5px;top:590.29px;width:727.3px;height:28.19px;background:#ebebeb;border-bottom:1px solid #d4d4d4;"></div>
<div style="left:934.5px;top:590.29px;width:1px;height:28.19px;background:#dcdcdc;"></div>
<svg width="23" height="22" style="left:575px;top:593.79px" viewBox="0 0 23 22"><path d="M2.6 0.6H15.4L21.9 6V20.5L19.9 19L17.6 21.2L15.1 19.2L12.7 21.2L10.2 19.2L7.8 21.2L5.3 19.2L2.9 21.2L0.6 19.4V2.6Q0.6 0.6 2.6 0.6Z" fill="#a6c6f0" stroke="#86ace0" stroke-width="1"/><path d="M15.4 0.6V6H21.9Z" fill="#eef7fc" fill-opacity=".7" stroke="#86ace0" stroke-width=".8"/><text x="9.6" y="15.2" text-anchor="middle" font-family="Liberation Sans,sans-serif" font-size="11.5" font-weight="700" fill="#163c70" stroke="#163c70" stroke-width=".45" textLength="15" lengthAdjust="spacingAndGlyphs">123</text></svg>
<span class="t j" style="left:603.61px;top:594.78px;transform:scaleX(0.9507);">RSI適用価格</span>
<span class="t d" style="left:940.24px;top:593.93px;transform:scaleX(1.0191);">Close price</span>
<div style="left:572.5px;top:618.48px;width:727.3px;height:28.19px;background:#ffffff;border-bottom:1px solid #d4d4d4;"></div>
<div style="left:934.5px;top:618.48px;width:1px;height:28.19px;background:#dcdcdc;"></div>
<svg width="23" height="22" style="left:575px;top:621.98px" viewBox="0 0 23 22"><path d="M2.6 0.6H15.4L21.9 6V20.5L19.9 19L17.6 21.2L15.1 19.2L12.7 21.2L10.2 19.2L7.8 21.2L5.3 19.2L2.9 21.2L0.6 19.4V2.6Q0.6 0.6 2.6 0.6Z" fill="#a6c6f0" stroke="#86ace0" stroke-width="1"/><path d="M15.4 0.6V6H21.9Z" fill="#eef7fc" fill-opacity=".7" stroke="#86ace0" stroke-width=".8"/><text x="9.6" y="15.2" text-anchor="middle" font-family="Liberation Sans,sans-serif" font-size="11.5" font-weight="700" fill="#163c70" stroke="#163c70" stroke-width=".45" textLength="15" lengthAdjust="spacingAndGlyphs">123</text></svg>
<span class="t j" style="left:603.89px;top:622.97px;transform:scaleX(0.9138);">ストキャス%K期間</span>
<span class="t d" style="left:940.25px;top:622.12px;">5</span>
<div style="left:572.5px;top:646.67px;width:727.3px;height:28.19px;background:#ebebeb;border-bottom:1px solid #d4d4d4;"></div>
<div style="left:934.5px;top:646.67px;width:1px;height:28.19px;background:#dcdcdc;"></div>
<svg width="23" height="22" style="left:575px;top:650.17px" viewBox="0 0 23 22"><path d="M2.6 0.6H15.4L21.9 6V20.5L19.9 19L17.6 21.2L15.1 19.2L12.7 21.2L10.2 19.2L7.8 21.2L5.3 19.2L2.9 21.2L0.6 19.4V2.6Q0.6 0.6 2.6 0.6Z" fill="#a6c6f0" stroke="#86ace0" stroke-width="1"/><path d="M15.4 0.6V6H21.9Z" fill="#eef7fc" fill-opacity=".7" stroke="#86ace0" stroke-width=".8"/><text x="9.6" y="15.2" text-anchor="middle" font-family="Liberation Sans,sans-serif" font-size="11.5" font-weight="700" fill="#163c70" stroke="#163c70" stroke-width=".45" textLength="15" lengthAdjust="spacingAndGlyphs">123</text></svg>
<span class="t j" style="left:603.89px;top:651.16px;transform:scaleX(0.9068);">ストキャス%D期間</span>
<span class="t d" style="left:940.25px;top:650.31px;">3</span>
<div style="left:572.5px;top:674.86px;width:727.3px;height:28.19px;background:#ffffff;border-bottom:1px solid #d4d4d4;"></div>
<div style="left:934.5px;top:674.86px;width:1px;height:28.19px;background:#dcdcdc;"></div>
<svg width="23" height="22" style="left:575px;top:678.36px" viewBox="0 0 23 22"><path d="M2.6 0.6H15.4L21.9 6V20.5L19.9 19L17.6 21.2L15.1 19.2L12.7 21.2L10.2 19.2L7.8 21.2L5.3 19.2L2.9 21.2L0.6 19.4V2.6Q0.6 0.6 2.6 0.6Z" fill="#a6c6f0" stroke="#86ace0" stroke-width="1"/><path d="M15.4 0.6V6H21.9Z" fill="#eef7fc" fill-opacity=".7" stroke="#86ace0" stroke-width=".8"/><text x="9.6" y="15.2" text-anchor="middle" font-family="Liberation Sans,sans-serif" font-size="11.5" font-weight="700" fill="#163c70" stroke="#163c70" stroke-width=".45" textLength="15" lengthAdjust="spacingAndGlyphs">123</text></svg>
<span class="t j" style="left:603.98px;top:679.35px;transform:scaleX(0.8233);">ストキャススローイング</span>
<span class="t d" style="left:940.25px;top:678.50px;">3</span>
<div style="left:572.5px;top:703.05px;width:727.3px;height:28.19px;background:#ebebeb;border-bottom:1px solid #d4d4d4;"></div>
<div style="left:934.5px;top:703.05px;width:1px;height:28.19px;background:#dcdcdc;"></div>
<svg width="23" height="22" style="left:575px;top:706.55px" viewBox="0 0 23 22"><path d="M2.6 0.6H15.4L21.9 6V20.5L19.9 19L17.6 21.2L15.1 19.2L12.7 21.2L10.2 19.2L7.8 21.2L5.3 19.2L2.9 21.2L0.6 19.4V2.6Q0.6 0.6 2.6 0.6Z" fill="#a6c6f0" stroke="#86ace0" stroke-width="1"/><path d="M15.4 0.6V6H21.9Z" fill="#eef7fc" fill-opacity=".7" stroke="#86ace0" stroke-width=".8"/><text x="9.6" y="15.2" text-anchor="middle" font-family="Liberation Sans,sans-serif" font-size="11.5" font-weight="700" fill="#163c70" stroke="#163c70" stroke-width=".45" textLength="15" lengthAdjust="spacingAndGlyphs">123</text></svg>
<span class="t j" style="left:603.88px;top:707.54px;transform:scaleX(0.9217);">ストキャスのMAの種類</span>
<span class="t d" style="left:940.23px;top:706.69px;transform:scaleX(1.0232);">Simple</span>
<div style="left:572.5px;top:731.24px;width:727.3px;height:28.19px;background:#ffffff;border-bottom:1px solid #d4d4d4;"></div>
<div style="left:934.5px;top:731.24px;width:1px;height:28.19px;background:#dcdcdc;"></div>
<svg width="23" height="22" style="left:575px;top:734.74px" viewBox="0 0 23 22"><path d="M2.6 0.6H15.4L21.9 6V20.5L19.9 19L17.6 21.2L15.1 19.2L12.7 21.2L10.2 19.2L7.8 21.2L5.3 19.2L2.9 21.2L0.6 19.4V2.6Q0.6 0.6 2.6 0.6Z" fill="#a6c6f0" stroke="#86ace0" stroke-width="1"/><path d="M15.4 0.6V6H21.9Z" fill="#eef7fc" fill-opacity=".7" stroke="#86ace0" stroke-width=".8"/><text x="9.6" y="15.2" text-anchor="middle" font-family="Liberation Sans,sans-serif" font-size="11.5" font-weight="700" fill="#163c70" stroke="#163c70" stroke-width=".45" textLength="15" lengthAdjust="spacingAndGlyphs">123</text></svg>
<span class="t j" style="left:603.93px;top:735.73px;transform:scaleX(0.8722);">ストキャス価格フィールド</span>
<span class="t d" style="left:939.58px;top:734.88px;transform:scaleX(1.1380);">Low/High</span>
<div style="left:572.5px;top:759.43px;width:727.3px;height:28.19px;background:#ebebeb;border-bottom:1px solid #d4d4d4;"></div>
<div style="left:934.5px;top:759.43px;width:1px;height:28.19px;background:#dcdcdc;"></div>
<svg width="23" height="22" style="left:575px;top:762.93px" viewBox="0 0 23 22"><path d="M2.6 0.6H15.4L21.9 6V20.5L19.9 19L17.6 21.2L15.1 19.2L12.7 21.2L10.2 19.2L7.8 21.2L5.3 19.2L2.9 21.2L0.6 19.4V2.6Q0.6 0.6 2.6 0.6Z" fill="#a6c6f0" stroke="#86ace0" stroke-width="1"/><path d="M15.4 0.6V6H21.9Z" fill="#eef7fc" fill-opacity=".7" stroke="#86ace0" stroke-width=".8"/><text x="9.6" y="15.2" text-anchor="middle" font-family="Liberation Sans,sans-serif" font-size="11.5" font-weight="700" fill="#163c70" stroke="#163c70" stroke-width=".45" textLength="15" lengthAdjust="spacingAndGlyphs">123</text></svg>
<span class="t j" style="left:603.56px;top:763.92px;transform:scaleX(0.9933);">MACD高速EMA期間</span>
<span class="t d" style="left:939.77px;top:763.07px;transform:scaleX(0.9841);">12</span>
<div style="left:572.5px;top:787.62px;width:727.3px;height:28.19px;background:#ffffff;border-bottom:1px solid #d4d4d4;"></div>
<div style="left:934.5px;top:787.62px;width:1px;height:28.19px;background:#dcdcdc;"></div>
<svg width="23" height="22" style="left:575px;top:791.12px" viewBox="0 0 23 22"><path d="M2.6 0.6H15.4L21.9 6V20.5L19.9 19L17.6 21.2L15.1 19.2L12.7 21.2L10.2 19.2L7.8 21.2L5.3 19.2L2.9 21.2L0.6 19.4V2.6Q0.6 0.6 2.6 0.6Z" fill="#a6c6f0" stroke="#86ace0" stroke-width="1"/><path d="M15.4 0.6V6H21.9Z" fill="#eef7fc" fill-opacity=".7" stroke="#86ace0" stroke-width=".8"/><text x="9.6" y="15.2" text-anchor="middle" font-family="Liberation Sans,sans-serif" font-size="11.5" font-weight="700" fill="#163c70" stroke="#163c70" stroke-width=".45" textLength="15" lengthAdjust="spacingAndGlyphs">123</text></svg>
<span class="t j" style="left:603.56px;top:792.11px;transform:scaleX(0.9933);">MACD低速EMA期間</span>
<span class="t d" style="left:940.24px;top:791.26px;transform:scaleX(1.0154);">26</span>
<div style="left:572.5px;top:815.81px;width:727.3px;height:21.89px;background:#ebebeb;"></div>
<div style="left:934.5px;top:815.81px;width:1px;height:21.89px;background:#dcdcdc;"></div>
<svg width="23" height="18.4" style="left:575px;top:819.31px" viewBox="0 0 23 18.4"><path d="M2.6 0.6H15.4L21.9 6V20.5L19.9 19L17.6 21.2L15.1 19.2L12.7 21.2L10.2 19.2L7.8 21.2L5.3 19.2L2.9 21.2L0.6 19.4V2.6Q0.6 0.6 2.6 0.6Z" fill="#a6c6f0" stroke="#86ace0" stroke-width="1"/><path d="M15.4 0.6V6H21.9Z" fill="#eef7fc" fill-opacity=".7" stroke="#86ace0" stroke-width=".8"/><text x="9.6" y="15.2" text-anchor="middle" font-family="Liberation Sans,sans-serif" font-size="11.5" font-weight="700" fill="#163c70" stroke="#163c70" stroke-width=".45" textLength="15" lengthAdjust="spacingAndGlyphs">123</text></svg>
<span class="t j" style="left:603.63px;top:820.30px;transform:scaleX(0.9324);">MACDシグナル期間</span>
<span class="t d" style="left:940.25px;top:819.45px;">9</span>
<div style="left:934.5px;top:104.1px;width:1px;height:35.5px;background:#e4e4e4;"></div>
<div style="left:936px;top:308.3px;width:364px;height:34px;background:#cce4f7;border:1.5px solid #3f70b3;border-bottom-width:2.6px;border-radius:2px 2px 0 0;"></div>
<span class="t d" style="left:941.18px;top:314.44px;transform:scaleX(0.8958);">RSI</span>
<svg width="16" height="10" style="left:1279px;top:320.5px" viewBox="0 0 16 10"><path d="M2 2.2L8 8L14 2.2" stroke="#56626e" stroke-width="1.3" fill="none"/></svg>
<div style="left:936px;top:341.5px;width:364px;height:256px;background:#ffffff;border:1.5px solid #4a79b8;border-top:none;box-shadow:2px 2px 3px rgba(0,0,0,.45);"></div>
<span class="t d" style="left:939.88px;top:342.84px;transform:scaleX(0.8958);">RSI</span>
<span class="t j" style="left:940.15px;top:364.87px;transform:scaleX(0.8492);">ストキャスティクス</span>
<span class="t d" style="left:939.68px;top:385.20px;transform:scaleX(1.0556);">MACD</span>
<span class="t j" style="left:940.15px;top:407.23px;transform:scaleX(0.8507);">ボリンジャーバンド</span>
<span class="t j" style="left:940.53px;top:428.41px;transform:scaleX(0.9414);">移動平均クロス</span>
<span class="t d" style="left:940.32px;top:448.74px;transform:scaleX(0.9109);">CCI</span>
<span class="t d" style="left:941.00px;top:469.92px;transform:scaleX(0.9667);">ATR</span>
<span class="t d" style="left:941.00px;top:491.10px;transform:scaleX(1.0112);">Williams %R</span>
<span class="t d" style="left:939.84px;top:512.28px;transform:scaleX(0.9293);">RCI</span>
<div style="left:937.5px;top:533.2px;width:361px;height:20.6px;background:#3479d7;"></div>
<span class="t j" style="left:940.24px;top:534.31px;color:#fff;transform:scaleX(1.0184);">一目均衡表</span>
<span class="t j" style="left:940.41px;top:555.49px;transform:scaleX(0.7925);">パーフェクトオーダー</span>
<span class="t j" style="left:940.54px;top:576.67px;transform:scaleX(0.9167);">使用しない</span>
<div style="left:1339.5px;top:750px;width:170.0px;height:33.299999999999955px;background:#fdfdfd;border:1px solid #d3d3d3;border-bottom-color:#bdbdbd;border-radius:4.5px;"></div>
<span class="t j" style="left:1380.26px;top:756.54px;transform:scaleX(0.9831);">読み込み (L)</span>
<div style="left:1339.5px;top:802px;width:170.0px;height:33.299999999999955px;background:#fdfdfd;border:1px solid #d3d3d3;border-bottom-color:#bdbdbd;border-radius:4.5px;"></div>
<span class="t j" style="left:1396.02px;top:808.54px;transform:scaleX(0.9573);">保存 (S)</span>
<div style="left:1132px;top:853.8px;width:121px;height:34.200000000000045px;background:#fdfdfd;border:1.8px solid #6a8fc2;border-radius:4.5px;"></div>
<span class="t d" style="left:1180.48px;top:859.94px;transform:scaleX(1.0227);">OK</span>
<div style="left:1266.5px;top:854.5px;width:119.5px;height:33.0px;background:#fdfdfd;border:1px solid #d3d3d3;border-bottom-color:#bdbdbd;border-radius:4.5px;"></div>
<span class="t j" style="left:1293.16px;top:860.89px;transform:scaleX(0.8737);">キャンセル</span>
<div style="left:1399px;top:854.5px;width:120.5px;height:33.0px;background:#fdfdfd;border:1px solid #d3d3d3;border-bottom-color:#bdbdbd;border-radius:4.5px;"></div>
<span class="t j" style="left:1432.65px;top:860.89px;transform:scaleX(0.9417);">リセット</span>
<svg width="12" height="12" style="left:1518px;top:886px" viewBox="0 0 12 12"><g fill="#b8b8b8"><rect x="8" y="1" width="1.6" height="1.6"/><rect x="5" y="4.5" width="1.6" height="1.6"/><rect x="8" y="4.5" width="1.6" height="1.6"/><rect x="2" y="8" width="1.6" height="1.6"/><rect x="5" y="8" width="1.6" height="1.6"/><rect x="8" y="8" width="1.6" height="1.6"/></g></svg>
<div style="left:0px;top:952px;width:1920px;height:33px;background:#f0f0f0;"></div>
<div style="left:0px;top:982.4px;width:1920px;height:2.6px;background:#f8f8f8;"></div>
<div style="left:0px;top:952px;width:1920px;height:3.2px;background:#ffffff;"></div>
<div style="left:0px;top:955px;width:1920px;height:2.1px;background:#464646;"></div>
<div style="left:127px;top:955px;width:124.5px;height:26.8px;background:#ffffff;border:1.6px solid #1c1c1c;border-top:none;border-bottom-width:2px;border-right-width:2px;"></div>
<span class="t" style="left:17.81px;top:958.58px;color:#8d8d8d;font-size:17px;line-height:22px;transform:scaleX(0.9136);">CADJPY,M15</span>
<span class="t" style="left:142.80px;top:958.58px;color:#1c1c1c;font-size:17px;line-height:22px;transform:scaleX(0.9219);">AUDUSD,M1</span>
<span class="t" style="left:266.70px;top:958.58px;color:#8d8d8d;font-size:17px;line-height:22px;transform:scaleX(0.9296);">AUDUSD,M5</span>
<span class="t" style="left:389.47px;top:958.58px;color:#8d8d8d;font-size:17px;line-height:22px;transform:scaleX(0.8854);">EURUSD,H1</span>
<span class="t" style="left:510.48px;top:958.58px;color:#8d8d8d;font-size:17px;line-height:22px;transform:scaleX(0.8942);">USDJPY,M5</span>
<span class="t" style="left:629.32px;top:958.58px;color:#8d8d8d;font-size:17px;line-height:22px;transform:scaleX(0.8512);">EURGBP,H1</span>
<div style="left:375.2px;top:960.3px;width:1.7px;height:18.5px;background:#555;"></div>
<div style="left:493px;top:960.3px;width:1.7px;height:18.5px;background:#555;"></div>
<div style="left:611.5px;top:960.3px;width:1.7px;height:18.5px;background:#555;"></div>
<div style="left:730px;top:960.3px;width:1.7px;height:18.5px;background:#555;"></div>
<svg width="60" height="14" style="left:1868.6px;top:961px" viewBox="0 0 60 14"><path d="M13 3L8.6 7L13 11Z" fill="#959595"/><path d="M36 3L40.4 7L36 11Z" fill="#959595"/></svg>
</div></body></html>
